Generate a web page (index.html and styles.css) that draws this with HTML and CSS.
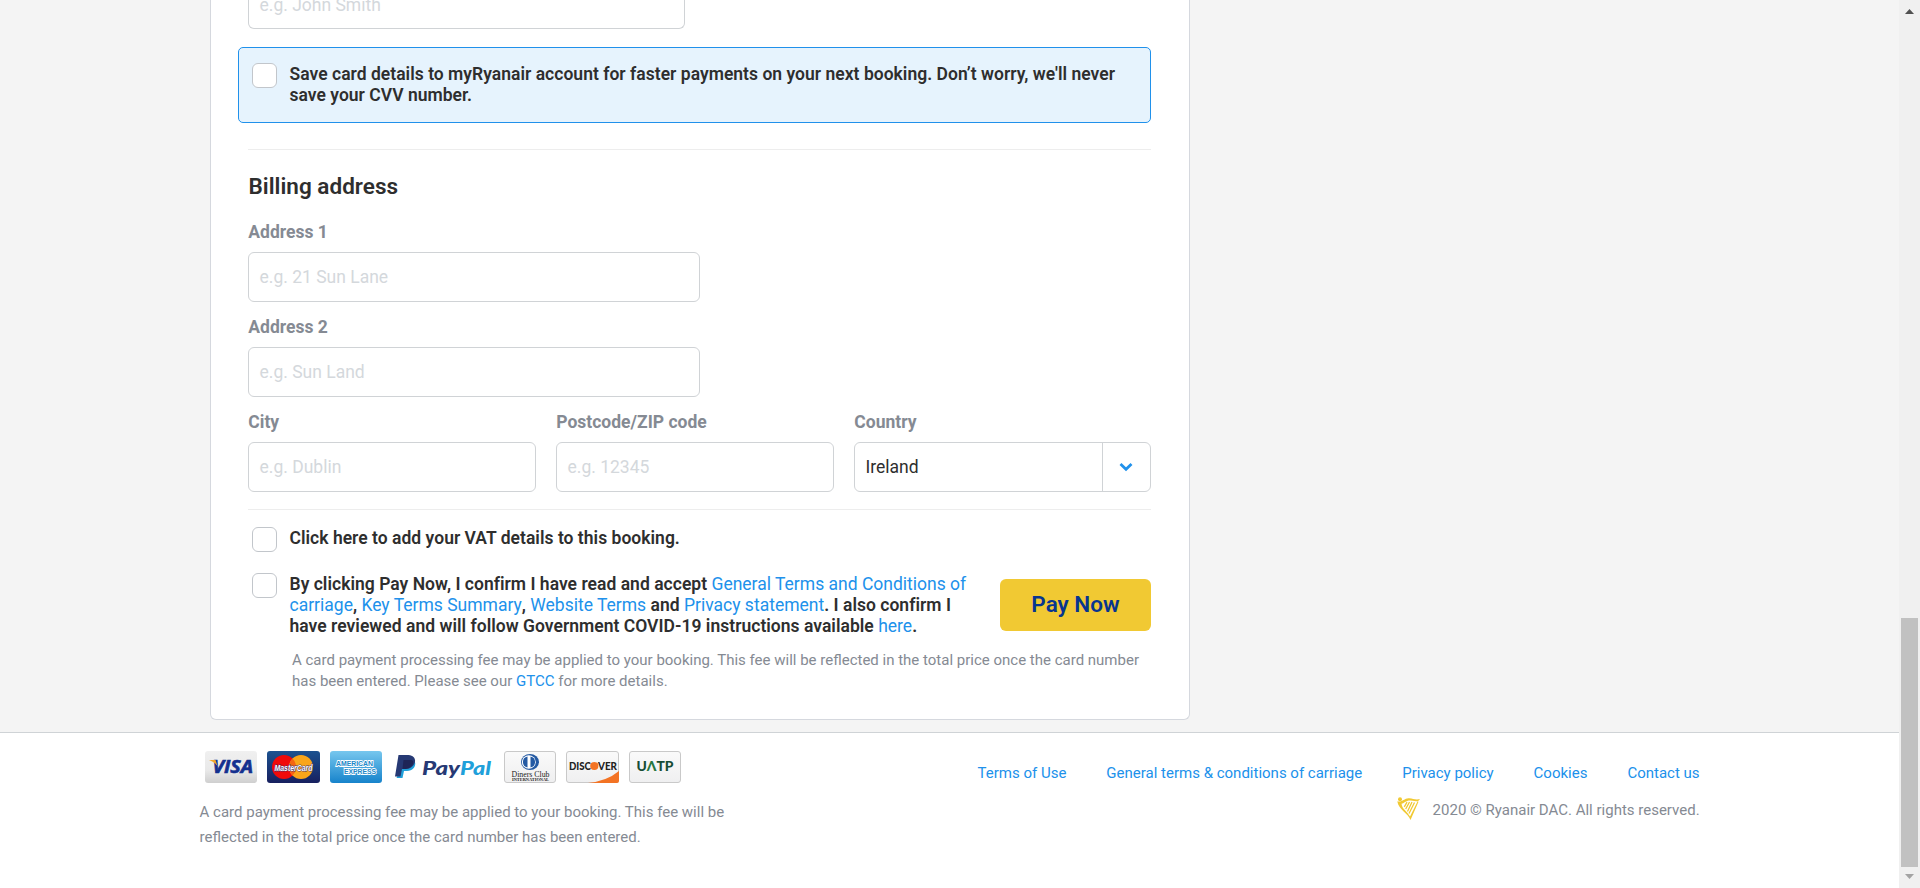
FILE: index.html
```
<!DOCTYPE html>
<html lang="en">
<head>
<meta charset="utf-8">
<title>Payment</title>
<link rel="stylesheet" href="styles.css">
</head>
<body>
<div class="viewport">
  <div class="page">
    <main class="main">
      <section class="card">
        <div class="input input-cut">e.g. John Smith</div>
        <div class="save-box">
          <span class="check"></span>
          <p class="strong save-text">Save card details to myRyanair account for faster payments on your next booking. Don’t worry, we'll never<br>save your CVV number.</p>
        </div>
        <div class="rule"></div>
        <h2 class="title">Billing address</h2>
        <div class="field wide"><label class="label">Address 1</label><div class="input">e.g. 21 Sun Lane</div></div>
        <div class="field wide"><label class="label">Address 2</label><div class="input">e.g. Sun Land</div></div>
        <div class="row">
          <div class="field city"><label class="label">City</label><div class="input">e.g. Dublin</div></div>
          <div class="field post"><label class="label">Postcode/ZIP code</label><div class="input">e.g. 12345</div></div>
          <div class="field country"><label class="label">Country</label>
            <div class="input select"><span class="value">Ireland</span><span class="arrow"><svg width="14" height="10" viewBox="0 0 14 10"><path d="M1.500 2l5.500 5.300L12.500 2" fill="none" stroke="#2091eb" stroke-width="2.800"/></svg></span></div>
          </div>
        </div>
        <div class="rule rule-low"></div>
        <div class="option">
          <span class="check"></span>
          <p class="strong">Click here to add your VAT details to this booking.</p>
        </div>
        <div class="option confirm">
          <span class="check"></span>
          <p class="strong confirm-text">By clicking Pay Now, I confirm I have read and accept <a>General Terms and Conditions of</a><br><a>carriage</a>, <a>Key Terms Summary</a>, <a>Website Terms</a> and <a>Privacy statement</a>. I also confirm I<br>have reviewed and will follow Government COVID-19 instructions available <a>here</a>.</p>
          <button class="pay">Pay Now</button>
        </div>
        <p class="small fee">A card payment processing fee may be applied to your booking. This fee will be reflected in the total price once the card number<br>has been entered. Please see our <a>GTCC</a> for more details.</p>
      </section>
    </main>
    <footer class="footer">
      <div class="foot-left">
        <svg class="logos" width="486" height="34" viewBox="0 0 486 34">
          <defs>
            <linearGradient id="grey" x2="0" y2="1"><stop offset="0" stop-color="#f0f0f0"/><stop offset=".6" stop-color="#e9e9e9"/><stop offset="1" stop-color="#cfcfcf"/></linearGradient>
            <linearGradient id="pale" x2="0" y2="1"><stop offset="0" stop-color="#fafafa"/><stop offset="1" stop-color="#efeff0"/></linearGradient>
            <linearGradient id="navy" x2="0" y2="1"><stop offset="0" stop-color="#1c5290"/><stop offset="1" stop-color="#17205f"/></linearGradient>
            <linearGradient id="sky" x2="0" y2="1"><stop offset="0" stop-color="#77c7ee"/><stop offset="1" stop-color="#1783cb"/></linearGradient>
          </defs>
          <rect x="5" y="1" width="52" height="32" rx="3" fill="url(#grey)"/>
          <text class="visa" x="12.500" y="22.500" textLength="40.500" lengthAdjust="spacingAndGlyphs">VISA</text>
          <path d="M9 10h6.500l2 6q-3-4-8.500-6z" fill="#f2a62c"/>
          <rect x="67" y="1" width="53" height="32" rx="3" fill="url(#navy)"/>
          <circle cx="84" cy="17" r="12" fill="#f00a0a"/><circle cx="101" cy="17" r="12" fill="#f9a51a"/>
          <path d="M92.500 8.500a12 12 0 0 1 0 17a12 12 0 0 1 0-17z" fill="#f46512"/>
          <text class="master" x="74.500" y="20.500" textLength="38" lengthAdjust="spacingAndGlyphs">MasterCard</text>
          <rect x="130" y="1" width="52" height="32" rx="3" fill="url(#sky)"/>
          <text class="amex" x="136" y="16" textLength="37" lengthAdjust="spacingAndGlyphs">AMERICAN</text>
          <text class="amex" x="144" y="24" textLength="32" lengthAdjust="spacingAndGlyphs">EXPRESS</text>
          <path d="M204.500 10h8.500c4 1 3 11-6 11h-3l-1.500 7h-6z" fill="#20a0da"/>
          <path d="M198.500 5h10c11 1 7 14-3 14h-3.500l-1.500 7.500h-5.500z" fill="#263974"/>
          <path d="M203.500 10h7.500c3 0 3 4 0 6.500c-2 2-4 2.500-8.500 2.500z" fill="#1e2557"/>
          <text class="paypal" x="222" y="24.500" fill="#263974" textLength="38" lengthAdjust="spacingAndGlyphs">Pay</text>
          <text class="paypal" x="260" y="24.500" fill="#20a0da" textLength="31" lengthAdjust="spacingAndGlyphs">Pal</text>
          <g stroke="#c9c9c9" fill="url(#pale)"><rect x="304.500" y="1.500" width="51" height="31" rx="2.500"/><rect x="366.500" y="1.500" width="52" height="31" rx="2.500"/><rect x="429.500" y="1.500" width="51" height="31" rx="2.500"/></g>
          <ellipse cx="330" cy="12" rx="9" ry="8" fill="#245aa3"/><ellipse cx="328.800" cy="12" rx="7" ry="6.800" fill="#fff"/>
          <path d="M327.500 6.500v11a5.600 5.600 0 0 1 0-11zM330.500 6.500v11a5.600 5.600 0 0 0 0-11z" fill="#245aa3"/>
          <text class="diners" x="311.500" y="26.500" font-size="8" textLength="38" lengthAdjust="spacingAndGlyphs">Diners Club</text>
          <text class="diners" x="312" y="31" font-size="4.500" font-weight="bold" textLength="37" lengthAdjust="spacingAndGlyphs">INTERNATIONAL</text>
          <path d="M388 33q19-2 31-12v10q0 2-2 2z" fill="#f37324"/>
          <text class="disc" x="369" y="20" textLength="22" lengthAdjust="spacingAndGlyphs">DISC</text>
          <circle cx="394.300" cy="16" r="4.100" fill="#f37324"/>
          <text class="disc" x="398" y="20" textLength="19" lengthAdjust="spacingAndGlyphs">VER</text>
          <text class="uatp" x="436.500" y="21.300" textLength="37" lengthAdjust="spacingAndGlyphs">U<tspan fill="#27763f">Λ</tspan>TP</text>
        </svg>
        <p class="small foot-text">A card payment processing fee may be applied to your booking. This fee will be<br>reflected in the total price once the card number has been entered.</p>
      </div>
      <div class="foot-right">
        <nav class="links small"><a>Terms of Use</a><a>General terms &amp; conditions of carriage</a><a>Privacy policy</a><a>Cookies</a><a>Contact us</a></nav>
        <div class="copy small">
          <svg width="23" height="23" viewBox="0 0 23 23"><circle cx="3" cy="2.300" r="2" fill="#f1c933"/><path d="M.3 4.200C5 5.500 7 1.500 11.500 1.200S18 3.500 23 2L21 4.200c-4 .6-7-1-10-.5C8 4.500 7 6.200 4.500 6.700C5 12 10 14 13 19.500L20.500 4.500l1 .3L13.500 23C11 16 1.500 12.500.300 4.200z" fill="#f1c933"/><path d="M12.500 5L8.700 12M15 5l-4.500 9.500M17.500 5.500L12 16.500M10 5.200L7.300 9.800" stroke="#f1c933" stroke-width="1.300" fill="none"/></svg>
          <span>2020 © Ryanair DAC. All rights reserved.</span>
        </div>
      </div>
    </footer>
  </div>
  <div class="scroll">
    <svg class="up" width="9" height="5" viewBox="0 0 9 5"><path d="M4.500 0L9 5H0z" fill="#505050"/></svg>
    <div class="thumb"></div>
    <svg class="down" width="9" height="5" viewBox="0 0 9 5"><path d="M0 0h9L4.500 5z" fill="#a3a3a3"/></svg>
  </div>
</div>
</body>
</html>
```
FILE: styles.css
```
* { box-sizing: border-box; }
body { margin: 0; font-family: Roboto, "Liberation Sans", sans-serif; color: #2e2e2e; overflow: hidden; }
p, h2 { margin: 0; }
a { color: #2091eb; font-weight: 400; }
.viewport { display: flex; height: 888px; width: 1920px; overflow: hidden; }
.page { width: 1899px; display: flex; flex-direction: column; background: #fff; }
.main { height: 732px; background: #f4f4f4; padding-left: 210px; }
.card { width: 980px; height: 720px; background: #fff; border: 1px solid #d5d8de; border-top: 0; border-radius: 0 0 6px 6px; padding: 0 38px 0 37px; overflow: hidden; }
.input { height: 50px; border: 1px solid #d0d3d6; border-radius: 6px; padding-left: 10.5px; font-size: 17.5px; line-height: 48px; color: #d4d8dc; background: #fff; white-space: nowrap; }
.input-cut { width: 437px; height: 29px; border-top: 0; border-radius: 0 0 6px 6px; line-height: 11px; }
.save-box { margin: 18px 0 0 -10px; height: 76px; border: 1px solid #2091eb; border-radius: 5px; background: #e6f3fd; display: flex; padding: 15px 0 0 13px; }
.check { flex: none; width: 25px; height: 25px; border: 1px solid #c2c6cb; border-radius: 6px; background: #fff; margin-right: 12.5px; }
.strong { font-size: 17.5px; font-weight: 600; line-height: 21px; letter-spacing: .023px; white-space: nowrap; padding-top: 1px; font-variant-ligatures: common-ligatures; }
.strong a { letter-spacing: 0; }
.rule { height: 1px; background: #ededed; margin-top: 26px; }
.rule-low { margin-top: 17px; }
.title { font-size: 22.5px; font-weight: 600; line-height: 30px; margin-top: 21px; padding-left: .5px; letter-spacing: .03px; }
.field { display: flex; flex-direction: column; }
.label { font-size: 17.5px; font-weight: 700; line-height: 21px; color: #858a93; margin-bottom: 9px; white-space: nowrap; padding-left: .3px; }
.wide { width: 452px; margin-top: 15px; }
.title + .wide { margin-top: 21px; }
.row { display: flex; gap: 20px; margin-top: 15px; }
.city { width: 288px; }
.post { width: 278px; }
.country { width: 297px; }
.select { display: flex; color: #2e2e2e; font-weight: 400; }
.value { flex: 1; }
.arrow { width: 48px; border-left: 1px solid #d0d3d6; display: flex; align-items: center; justify-content: center; padding-right: 1px; }
.option { display: flex; padding-left: 4px; margin-top: 17px; }
.confirm { margin-top: 21px; height: 63px; }
.confirm-text { flex: 1; }
.pay { width: 151px; height: 52px; margin-top: 6px; border: 0; border-radius: 6px; background: #f1c933; color: #073590; font: 600 22.5px/48px Roboto, sans-serif; padding: 0 0 2px; }
.small { font-size: 15px; color: #858a93; white-space: nowrap; }
.fee { line-height: 21px; margin: 14px 0 0 44px; }
.footer { height: 156px; border-top: 1px solid #cfd3d6; padding: 17px 199.4px 0 199.6px; display: flex; justify-content: space-between; }
.foot-left { display: flex; flex-direction: column; }
.logos { display: block; }
.foot-text { line-height: 25px; margin-top: 16px; }
.foot-right { display: flex; flex-direction: column; align-items: flex-end; }
.links { display: flex; gap: 40px; line-height: 20px; margin-top: 13px; }
.copy { display: flex; align-items: flex-start; gap: 13px; line-height: 20px; margin-top: 14px; }
.copy span { margin-top: 3px; }
.scroll { width: 21px; background: #f0f0f0; display: flex; flex-direction: column; align-items: center; padding-top: 9px; }
.thumb { width: 17px; height: 249px; background: #c1c1c1; margin: 604px 0 7px; flex: none; }
.up, .down { flex: none; }
.visa { font: italic bold 17px "Open Sans", sans-serif; fill: #14308f; stroke: #14308f; stroke-width: .6px; }
.master { font: italic bold 8.500px "Liberation Sans", sans-serif; fill: #fff; stroke: #43316a; stroke-width: 1px; paint-order: stroke; }
.amex { font: bold 7.500px "Liberation Sans", sans-serif; fill: #2087c8; stroke: #fff; stroke-width: 1.800px; paint-order: stroke; }
.paypal { font: italic 900 19px Lato, sans-serif; }
.diners { font-family: "Liberation Serif", serif; fill: #222; }
.disc { font: 900 11px Lato, sans-serif; fill: #222; }
.uatp { font: 900 14px Lato, sans-serif; fill: #164d35; }
```
